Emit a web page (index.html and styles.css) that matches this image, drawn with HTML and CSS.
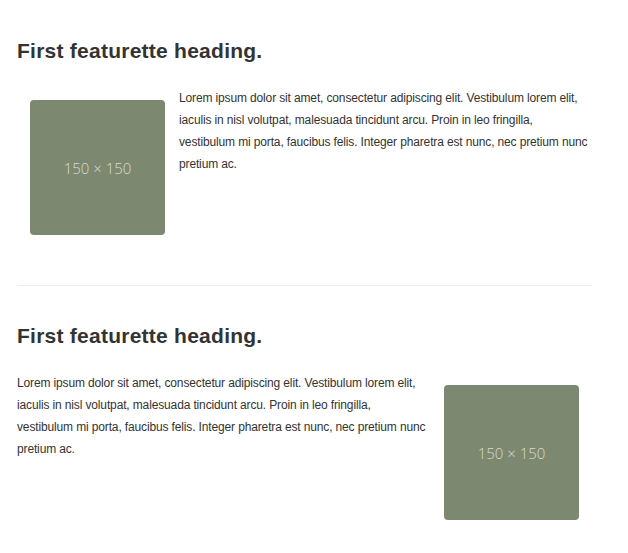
FILE: index.html
```html
<!DOCTYPE html>
<html>
<head>
<meta charset="utf-8">
<link rel="stylesheet" href="styles.css">
</head>
<body>
<div class="page">
  <section class="featurette">
    <h2 class="heading">First featurette heading.</h2>
    <div class="row">
      <div class="thumb"><span>150 × 150</span></div>
      <p class="lead">Lorem ipsum dolor sit amet, consectetur adipiscing elit. Vestibulum lorem elit, iaculis in nisl volutpat, malesuada tincidunt arcu. Proin in leo fringilla, vestibulum mi porta, faucibus felis. Integer pharetra est nunc, nec pretium nunc pretium ac.</p>
    </div>
  </section>
  <hr class="divider">
  <section class="featurette">
    <h2 class="heading">First featurette heading.</h2>
    <div class="row">
      <p class="lead">Lorem ipsum dolor sit amet, consectetur adipiscing elit. Vestibulum lorem elit, iaculis in nisl volutpat, malesuada tincidunt arcu. Proin in leo fringilla, vestibulum mi porta, faucibus felis. Integer pharetra est nunc, nec pretium nunc pretium ac.</p>
      <div class="thumb right"><span>150 × 150</span></div>
    </div>
  </section>
</div>
</body>
</html>
```
FILE: styles.css
```css
html, body {
  margin: 0;
  padding: 0;
  background: #ffffff;
}
.page {
  width: 575px;
  padding: 39px 0 0 17px;
  font-family: "Liberation Sans", Arial, sans-serif;
  color: #333333;
}
.heading {
  margin: 0;
  font-size: 21px;
  line-height: 23px;
  font-weight: bold;
  letter-spacing: 0.25px;
  color: #333333;
}
.row {
  display: flex;
  align-items: flex-start;
  margin-top: 25px;
}
.thumb {
  flex: 0 0 135px;
  width: 135px;
  height: 135px;
  margin: 13px 14px 0 13px;
  background: #7d8870;
  border-radius: 4px;
  display: flex;
  align-items: center;
  justify-content: center;
}
.thumb.right {
  margin: 13px 13px 0 17px;
}
.thumb span {
  font-family: "Open Sans", sans-serif;
  font-size: 15px;
  font-weight: 300;
  color: #d6dbcf;
}
.lead {
  flex: 0 0 410px;
  width: 410px;
  margin: 0;
  font-size: 12px;
  line-height: 22px;
  letter-spacing: -0.14px;
}
.divider {
  margin: 50px 0 38px;
  border: 0;
  border-top: 1px solid #eeeeee;
}
```
